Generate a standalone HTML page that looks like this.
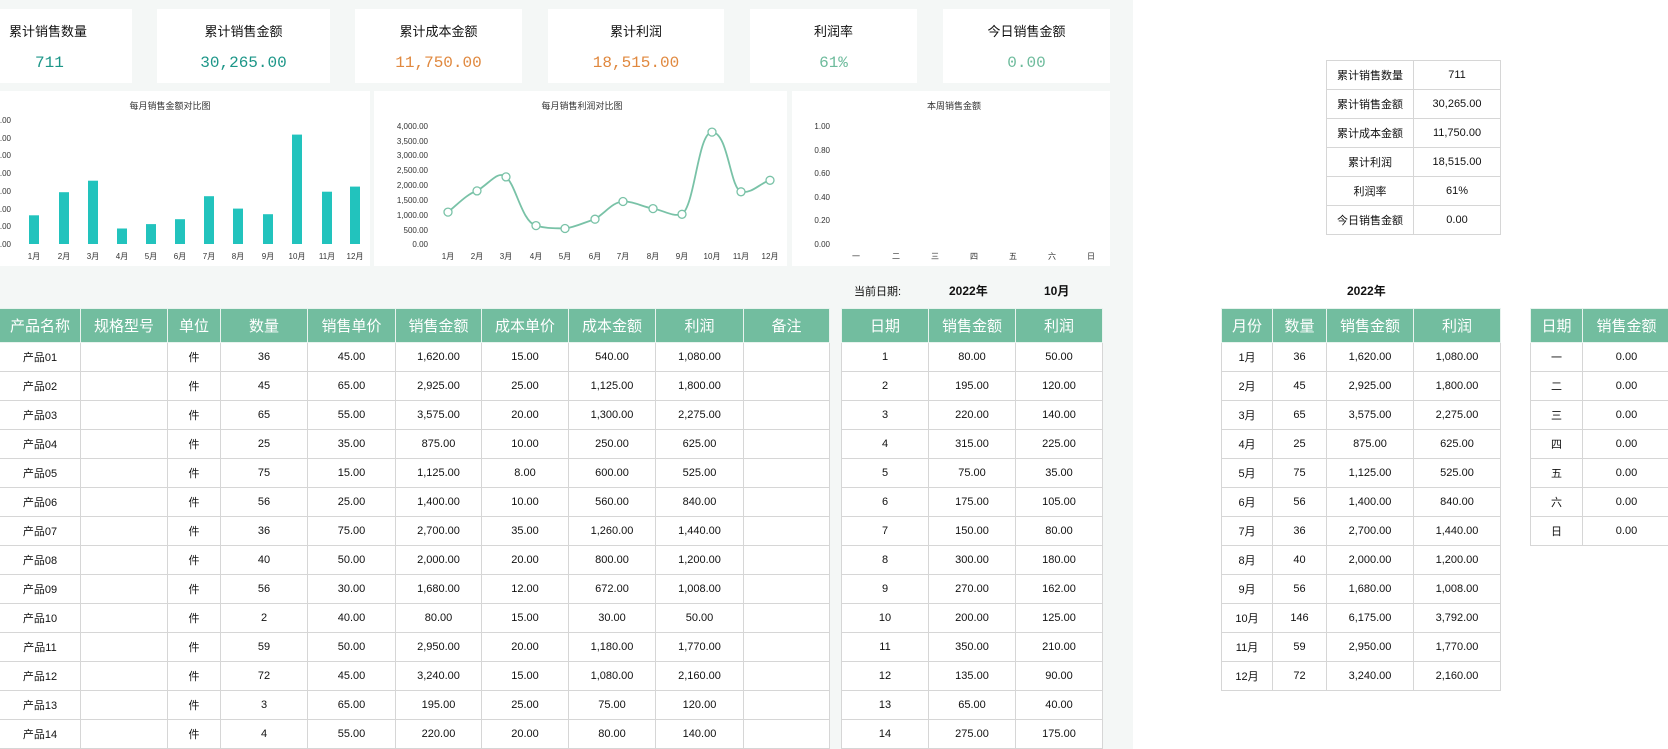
<!DOCTYPE html>
<html><head><meta charset="utf-8"><style>
*{margin:0;padding:0;box-sizing:border-box}
html,body{width:1668px;height:749px;overflow:hidden}
body{background:#fff;font-family:"Liberation Sans","Noto Sans CJK SC",sans-serif;color:#111;position:relative}
.bg{position:absolute;left:0;top:0;width:1133px;height:749px;background:#f4f7f6}
.card{position:absolute;top:9px;height:74px;background:#fff}
.card .t{position:absolute;top:12px;width:100%;text-align:center;font-size:13px}
.card .v{position:absolute;top:45px;width:100%;text-align:center;font-size:16px;font-family:"Liberation Mono","Noto Sans CJK SC",monospace}
.panel{position:absolute;background:#fff}
table{position:absolute;border-collapse:collapse;table-layout:fixed;font-size:11px;background:#fff}
td,th{border:1px solid #d6d6d6;text-align:center;height:29px;white-space:nowrap;overflow:hidden;font-weight:normal;padding:0;vertical-align:middle}
th{background:#72bd9f;color:#fff;font-size:15px;height:34px;border-color:#e8f3ee}
.lbl{position:absolute;font-size:12px;font-weight:bold}
</style></head><body>
<div class="bg"></div>
<div class="card" style="left:0;width:132px"><div class="t" style="text-align:left;left:9px">累计销售数量</div><div class="v" style="text-align:left;left:35px;color:#1c9688">711</div></div>
<div class="card" style="left:157px;width:173px"><div class="t">累计销售金额</div><div class="v" style="color:#1c9688">30,265.00</div></div>
<div class="card" style="left:355px;width:167px"><div class="t">累计成本金额</div><div class="v" style="color:#e0883e">11,750.00</div></div>
<div class="card" style="left:548px;width:176px"><div class="t">累计利润</div><div class="v" style="color:#e0883e">18,515.00</div></div>
<div class="card" style="left:750px;width:167px"><div class="t">利润率</div><div class="v" style="color:#6dbb9c">61%</div></div>
<div class="card" style="left:943px;width:167px"><div class="t">今日销售金额</div><div class="v" style="color:#6dbb9c">0.00</div></div>

<div class="panel" style="left:0;top:91px;width:370px;height:175px"></div>
<div class="panel" style="left:374px;top:91px;width:413px;height:175px"></div>
<div class="panel" style="left:792px;top:91px;width:318px;height:175px"></div>
<svg style="position:absolute;left:0;top:0" width="1133" height="270" font-family="Liberation Sans,Noto Sans CJK SC,sans-serif" font-size="8" fill="#333">
<text x="170" y="109" text-anchor="middle" font-size="9">每月销售金额对比图</text>
<g text-anchor="end"><text x="11" y="123">7,000.00</text><text x="11" y="141">6,000.00</text><text x="11" y="158">5,000.00</text><text x="11" y="176">4,000.00</text><text x="11" y="194">3,000.00</text><text x="11" y="212">2,000.00</text><text x="11" y="229">1,000.00</text><text x="11" y="247">0.00</text></g>
<g fill="#22c3bd">
<rect x="29" y="215.3" width="10" height="28.7"/><rect x="59" y="192.2" width="10" height="51.8"/><rect x="88" y="180.7" width="10" height="63.3"/><rect x="117" y="228.5" width="10" height="15.5"/><rect x="146" y="224.1" width="10" height="19.9"/><rect x="175" y="219.2" width="10" height="24.8"/><rect x="204" y="196.2" width="10" height="47.8"/><rect x="233" y="208.6" width="10" height="35.4"/><rect x="263" y="214.2" width="10" height="29.8"/><rect x="292" y="134.6" width="10" height="109.4"/><rect x="322" y="191.7" width="10" height="52.3"/><rect x="350" y="186.6" width="10" height="57.4"/></g>
<g text-anchor="middle"><text x="34" y="259">1月</text><text x="64" y="259">2月</text><text x="93" y="259">3月</text><text x="122" y="259">4月</text><text x="151" y="259">5月</text><text x="180" y="259">6月</text><text x="209" y="259">7月</text><text x="238" y="259">8月</text><text x="268" y="259">9月</text><text x="297" y="259">10月</text><text x="327" y="259">11月</text><text x="355" y="259">12月</text></g>
<text x="582" y="109" text-anchor="middle" font-size="9">每月销售利润对比图</text>
<g text-anchor="end"><text x="428" y="129">4,000.00</text><text x="428" y="144">3,500.00</text><text x="428" y="158">3,000.00</text><text x="428" y="173">2,500.00</text><text x="428" y="188">2,000.00</text><text x="428" y="203">1,500.00</text><text x="428" y="218">1,000.00</text><text x="428" y="233">500.00</text><text x="428" y="247">0.00</text></g>
<path d="M448,212.1 C458,204 467,194 477,190.9 C490,183 498,170 506,176.9 C516,185 522,222 536,225.6 C548,229 556,228 565,228.5 C576,227 585,222 595,219.2 C606,212 613,202 623,201.5 C633,201 643,207 653,208.6 C663,210 672,217 682,214.3 C695,205 698,132 712,132.1 C728,132 730,188 741,191.8 C752,194 760,183 770,180.3" fill="none" stroke="#79c2a7" stroke-width="1.8"/>
<g fill="#fff" stroke="#79c2a7" stroke-width="1.3"><circle cx="448" cy="212.1" r="4"/><circle cx="477" cy="190.9" r="4"/><circle cx="506" cy="176.9" r="4"/><circle cx="536" cy="225.6" r="4"/><circle cx="565" cy="228.5" r="4"/><circle cx="595" cy="219.2" r="4"/><circle cx="623" cy="201.5" r="4"/><circle cx="653" cy="208.6" r="4"/><circle cx="682" cy="214.3" r="4"/><circle cx="712" cy="132.1" r="4"/><circle cx="741" cy="191.8" r="4"/><circle cx="770" cy="180.3" r="4"/></g>
<g text-anchor="middle"><text x="448" y="259">1月</text><text x="477" y="259">2月</text><text x="506" y="259">3月</text><text x="536" y="259">4月</text><text x="565" y="259">5月</text><text x="595" y="259">6月</text><text x="623" y="259">7月</text><text x="653" y="259">8月</text><text x="682" y="259">9月</text><text x="712" y="259">10月</text><text x="741" y="259">11月</text><text x="770" y="259">12月</text></g>
<text x="954" y="109" text-anchor="middle" font-size="9">本周销售金额</text>
<g text-anchor="end"><text x="830" y="129">1.00</text><text x="830" y="153">0.80</text><text x="830" y="176">0.60</text><text x="830" y="200">0.40</text><text x="830" y="223">0.20</text><text x="830" y="247">0.00</text></g>
<g text-anchor="middle"><text x="856" y="259">一</text><text x="896" y="259">二</text><text x="935" y="259">三</text><text x="974" y="259">四</text><text x="1013" y="259">五</text><text x="1052" y="259">六</text><text x="1091" y="259">日</text></g>
<rect x="1112" y="272" width="2" height="477" fill="#a8d8c4"/>
</svg>

<div class="lbl" style="left:854px;top:283px;font-weight:normal;font-size:11px">当前日期:</div>
<div class="lbl" style="left:949px;top:282px">2022年</div>
<div class="lbl" style="left:1044px;top:282px">10月</div>
<div class="lbl" style="left:1347px;top:282px">2022年</div>

<table style="left:-1px;top:308px;width:830px">
<colgroup><col style="width:81px"><col style="width:87px"><col style="width:53px"><col style="width:87px"><col style="width:88px"><col style="width:86px"><col style="width:87px"><col style="width:87px"><col style="width:88px"><col style="width:86px"></colgroup>
<tr><th>产品名称</th><th>规格型号</th><th>单位</th><th>数量</th><th>销售单价</th><th>销售金额</th><th>成本单价</th><th>成本金额</th><th>利润</th><th>备注</th></tr>
<tr><td>产品01</td><td></td><td>件</td><td>36</td><td>45.00</td><td>1,620.00</td><td>15.00</td><td>540.00</td><td>1,080.00</td><td></td></tr>
<tr><td>产品02</td><td></td><td>件</td><td>45</td><td>65.00</td><td>2,925.00</td><td>25.00</td><td>1,125.00</td><td>1,800.00</td><td></td></tr>
<tr><td>产品03</td><td></td><td>件</td><td>65</td><td>55.00</td><td>3,575.00</td><td>20.00</td><td>1,300.00</td><td>2,275.00</td><td></td></tr>
<tr><td>产品04</td><td></td><td>件</td><td>25</td><td>35.00</td><td>875.00</td><td>10.00</td><td>250.00</td><td>625.00</td><td></td></tr>
<tr><td>产品05</td><td></td><td>件</td><td>75</td><td>15.00</td><td>1,125.00</td><td>8.00</td><td>600.00</td><td>525.00</td><td></td></tr>
<tr><td>产品06</td><td></td><td>件</td><td>56</td><td>25.00</td><td>1,400.00</td><td>10.00</td><td>560.00</td><td>840.00</td><td></td></tr>
<tr><td>产品07</td><td></td><td>件</td><td>36</td><td>75.00</td><td>2,700.00</td><td>35.00</td><td>1,260.00</td><td>1,440.00</td><td></td></tr>
<tr><td>产品08</td><td></td><td>件</td><td>40</td><td>50.00</td><td>2,000.00</td><td>20.00</td><td>800.00</td><td>1,200.00</td><td></td></tr>
<tr><td>产品09</td><td></td><td>件</td><td>56</td><td>30.00</td><td>1,680.00</td><td>12.00</td><td>672.00</td><td>1,008.00</td><td></td></tr>
<tr><td>产品10</td><td></td><td>件</td><td>2</td><td>40.00</td><td>80.00</td><td>15.00</td><td>30.00</td><td>50.00</td><td></td></tr>
<tr><td>产品11</td><td></td><td>件</td><td>59</td><td>50.00</td><td>2,950.00</td><td>20.00</td><td>1,180.00</td><td>1,770.00</td><td></td></tr>
<tr><td>产品12</td><td></td><td>件</td><td>72</td><td>45.00</td><td>3,240.00</td><td>15.00</td><td>1,080.00</td><td>2,160.00</td><td></td></tr>
<tr><td>产品13</td><td></td><td>件</td><td>3</td><td>65.00</td><td>195.00</td><td>25.00</td><td>75.00</td><td>120.00</td><td></td></tr>
<tr><td>产品14</td><td></td><td>件</td><td>4</td><td>55.00</td><td>220.00</td><td>20.00</td><td>80.00</td><td>140.00</td><td></td></tr>
</table>

<table style="left:841px;top:308px;width:261px">
<colgroup><col style="width:87px"><col style="width:87px"><col style="width:87px"></colgroup>
<tr><th>日期</th><th>销售金额</th><th>利润</th></tr>
<tr><td>1</td><td>80.00</td><td>50.00</td></tr>
<tr><td>2</td><td>195.00</td><td>120.00</td></tr>
<tr><td>3</td><td>220.00</td><td>140.00</td></tr>
<tr><td>4</td><td>315.00</td><td>225.00</td></tr>
<tr><td>5</td><td>75.00</td><td>35.00</td></tr>
<tr><td>6</td><td>175.00</td><td>105.00</td></tr>
<tr><td>7</td><td>150.00</td><td>80.00</td></tr>
<tr><td>8</td><td>300.00</td><td>180.00</td></tr>
<tr><td>9</td><td>270.00</td><td>162.00</td></tr>
<tr><td>10</td><td>200.00</td><td>125.00</td></tr>
<tr><td>11</td><td>350.00</td><td>210.00</td></tr>
<tr><td>12</td><td>135.00</td><td>90.00</td></tr>
<tr><td>13</td><td>65.00</td><td>40.00</td></tr>
<tr><td>14</td><td>275.00</td><td>175.00</td></tr>
</table>

<table style="left:1326px;top:60px;width:174px">
<colgroup><col style="width:87px"><col style="width:87px"></colgroup>
<tr><td>累计销售数量</td><td>711</td></tr>
<tr><td>累计销售金额</td><td>30,265.00</td></tr>
<tr><td>累计成本金额</td><td>11,750.00</td></tr>
<tr><td>累计利润</td><td>18,515.00</td></tr>
<tr><td>利润率</td><td>61%</td></tr>
<tr><td>今日销售金额</td><td>0.00</td></tr>
</table>

<table style="left:1221px;top:308px;width:279px">
<colgroup><col style="width:51px"><col style="width:54px"><col style="width:87px"><col style="width:87px"></colgroup>
<tr><th>月份</th><th>数量</th><th>销售金额</th><th>利润</th></tr>
<tr><td>1月</td><td>36</td><td>1,620.00</td><td>1,080.00</td></tr>
<tr><td>2月</td><td>45</td><td>2,925.00</td><td>1,800.00</td></tr>
<tr><td>3月</td><td>65</td><td>3,575.00</td><td>2,275.00</td></tr>
<tr><td>4月</td><td>25</td><td>875.00</td><td>625.00</td></tr>
<tr><td>5月</td><td>75</td><td>1,125.00</td><td>525.00</td></tr>
<tr><td>6月</td><td>56</td><td>1,400.00</td><td>840.00</td></tr>
<tr><td>7月</td><td>36</td><td>2,700.00</td><td>1,440.00</td></tr>
<tr><td>8月</td><td>40</td><td>2,000.00</td><td>1,200.00</td></tr>
<tr><td>9月</td><td>56</td><td>1,680.00</td><td>1,008.00</td></tr>
<tr><td>10月</td><td>146</td><td>6,175.00</td><td>3,792.00</td></tr>
<tr><td>11月</td><td>59</td><td>2,950.00</td><td>1,770.00</td></tr>
<tr><td>12月</td><td>72</td><td>3,240.00</td><td>2,160.00</td></tr>
</table>

<table style="left:1530px;top:308px;width:140px">
<colgroup><col style="width:52px"><col style="width:88px"></colgroup>
<tr><th>日期</th><th>销售金额</th></tr>
<tr><td>一</td><td>0.00</td></tr>
<tr><td>二</td><td>0.00</td></tr>
<tr><td>三</td><td>0.00</td></tr>
<tr><td>四</td><td>0.00</td></tr>
<tr><td>五</td><td>0.00</td></tr>
<tr><td>六</td><td>0.00</td></tr>
<tr><td>日</td><td>0.00</td></tr>
</table>
</body></html>
